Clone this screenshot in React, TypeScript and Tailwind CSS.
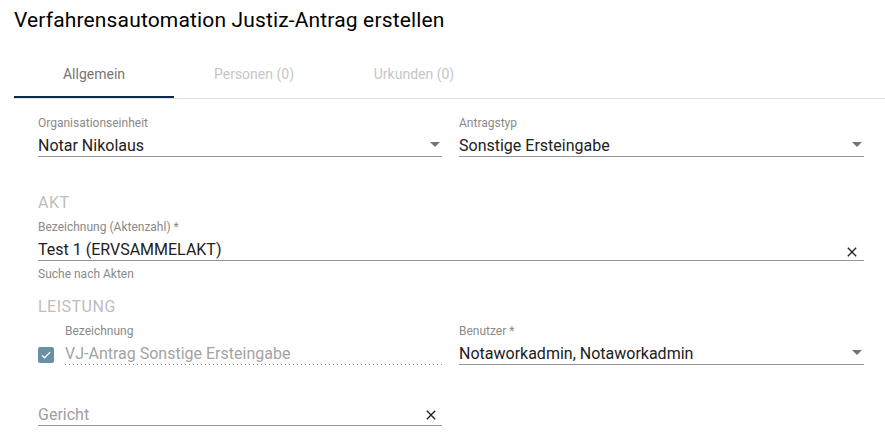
import React from "react";

const font = { fontFamily: "Roboto, 'Noto Sans', Arial, sans-serif" };

function Arrow() {
  return (
    <div className="mr-[2px] mb-[3px] h-0 w-0 shrink-0 border-l-[5px] border-r-[5px] border-t-[5px] border-l-transparent border-r-transparent border-t-[#757575]" />
  );
}

function CloseIcon({ className }: { className?: string }) {
  return (
    <svg viewBox="0 0 24 24" width="16" height="16" className={className} fill="#212121">
      <path d="M19 6.41L17.59 5 12 10.59 6.41 5 5 6.41 10.59 12 5 17.59 6.41 19 12 13.41 17.59 19 19 17.59 13.41 12z" />
    </svg>
  );
}

function Label({ children, className = "" }: { children: React.ReactNode; className?: string }) {
  return <div className={`text-[12px] leading-[14px] text-[#8a8a8a] whitespace-nowrap ${className}`}>{children}</div>;
}

function Section({ children, className = "" }: { children: React.ReactNode; className?: string }) {
  return <div className={`text-[16px] leading-[20px] tracking-[0.5px] text-[#bdbdbd] ${className}`}>{children}</div>;
}

export default function App() {
  return (
    <div className="w-[885px] h-[441px] overflow-hidden bg-white pl-[14px]" style={font}>
      <div className="pt-[8px] text-[21px] leading-[25px] tracking-[0.15px] text-black">Verfahrensautomation Justiz-Antrag erstellen</div>

      <div className="mt-[17px] flex border-b border-[#e0e0e0]">
        <div className="relative flex h-[48px] w-[160px] items-center justify-center text-[14px] font-normal leading-[20px] text-[#757575]">
          Allgemein
          <div className="absolute bottom-0 left-0 h-[2px] w-full bg-[#0e2a47]" />
        </div>
        <div className="flex h-[48px] w-[160px] items-center justify-center text-[14px] font-normal leading-[20px] text-[#c6c6c6]">
          Personen (0)
        </div>
        <div className="flex h-[48px] w-[160px] items-center justify-center text-[14px] font-normal leading-[20px] text-[#c6c6c6]">
          Urkunden (0)
        </div>
      </div>

      <div className="w-[826px] pl-[24px] box-content">
        <div className="grid grid-cols-[404px_405px] gap-x-[17px] pt-[17px]">
          <div>
            <Label>Organisationseinheit</Label>
            <div className="mt-[6px] flex h-[20px] items-center border-b border-[#949494] box-content">
              <div className="flex-1 text-[16px] leading-[20px] text-[#212121]">Notar Nikolaus</div>
              <Arrow />
            </div>
          </div>
          <div>
            <Label>Antragstyp</Label>
            <div className="mt-[6px] flex h-[20px] items-center border-b border-[#949494] box-content">
              <div className="flex-1 text-[16px] leading-[20px] text-[#212121]">Sonstige Ersteingabe</div>
              <Arrow />
            </div>
          </div>
        </div>

        <Section className="mt-[36px]">AKT</Section>
        <Label className="mt-[7px]">Bezeichnung (Aktenzahl) *</Label>
        <div className="mt-[6px] flex h-[20px] items-center border-b border-[#949494] box-content">
          <div className="flex-1 text-[16px] leading-[20px] text-[#212121]">Test 1 (ERVSAMMELAKT)</div>
          <CloseIcon className="mr-[4px] mt-[3px] shrink-0" />
        </div>
        <Label className="mt-[6px]">Suche nach Akten</Label>

        <Section className="mt-[16px]">LEISTUNG</Section>
        <div className="grid grid-cols-[404px_405px] gap-x-[17px]">
          <div className="flex">
            <div className="flex w-[27px] shrink-0 flex-col">
              <div className="mt-[30px] flex h-[16px] w-[16px] items-center justify-center rounded-[2px] bg-[#6b8fa6]">
                <svg viewBox="0 0 24 24" width="12" height="12" fill="none" stroke="#ffffff" strokeWidth="2.6">
                  <path d="M4.1 12.7L9 17.6 20.3 6.3" />
                </svg>
              </div>
            </div>
            <div className="flex-1">
              <Label className="mt-[7px]">Bezeichnung</Label>
              <div className="mt-[6px] h-[20px] text-[16px] leading-[20px] text-[#a3a3a3]">VJ-Antrag Sonstige Ersteingabe</div>
              <div className="h-px bg-[linear-gradient(to_right,rgba(0,0,0,0.42)_0%,rgba(0,0,0,0.42)_33%,transparent_0%)] bg-[length:4px_1px] bg-repeat-x" />
            </div>
          </div>
          <div>
            <Label className="mt-[7px]">Benutzer *</Label>
            <div className="mt-[6px] flex h-[20px] items-center border-b border-[#949494] box-content">
              <div className="flex-1 text-[16px] leading-[20px] text-[#212121]">Notaworkadmin, Notaworkadmin</div>
              <Arrow />
            </div>
          </div>
        </div>

        <div className="w-[404px]">
          <div className="mt-[40px] flex h-[20px] items-center border-b border-[#949494] box-content">
            <div className="flex-1 text-[16px] leading-[20px] text-[#9e9e9e]">Gericht</div>
            <CloseIcon className="mr-[3px] shrink-0" />
          </div>
        </div>
      </div>
    </div>
  );
}
